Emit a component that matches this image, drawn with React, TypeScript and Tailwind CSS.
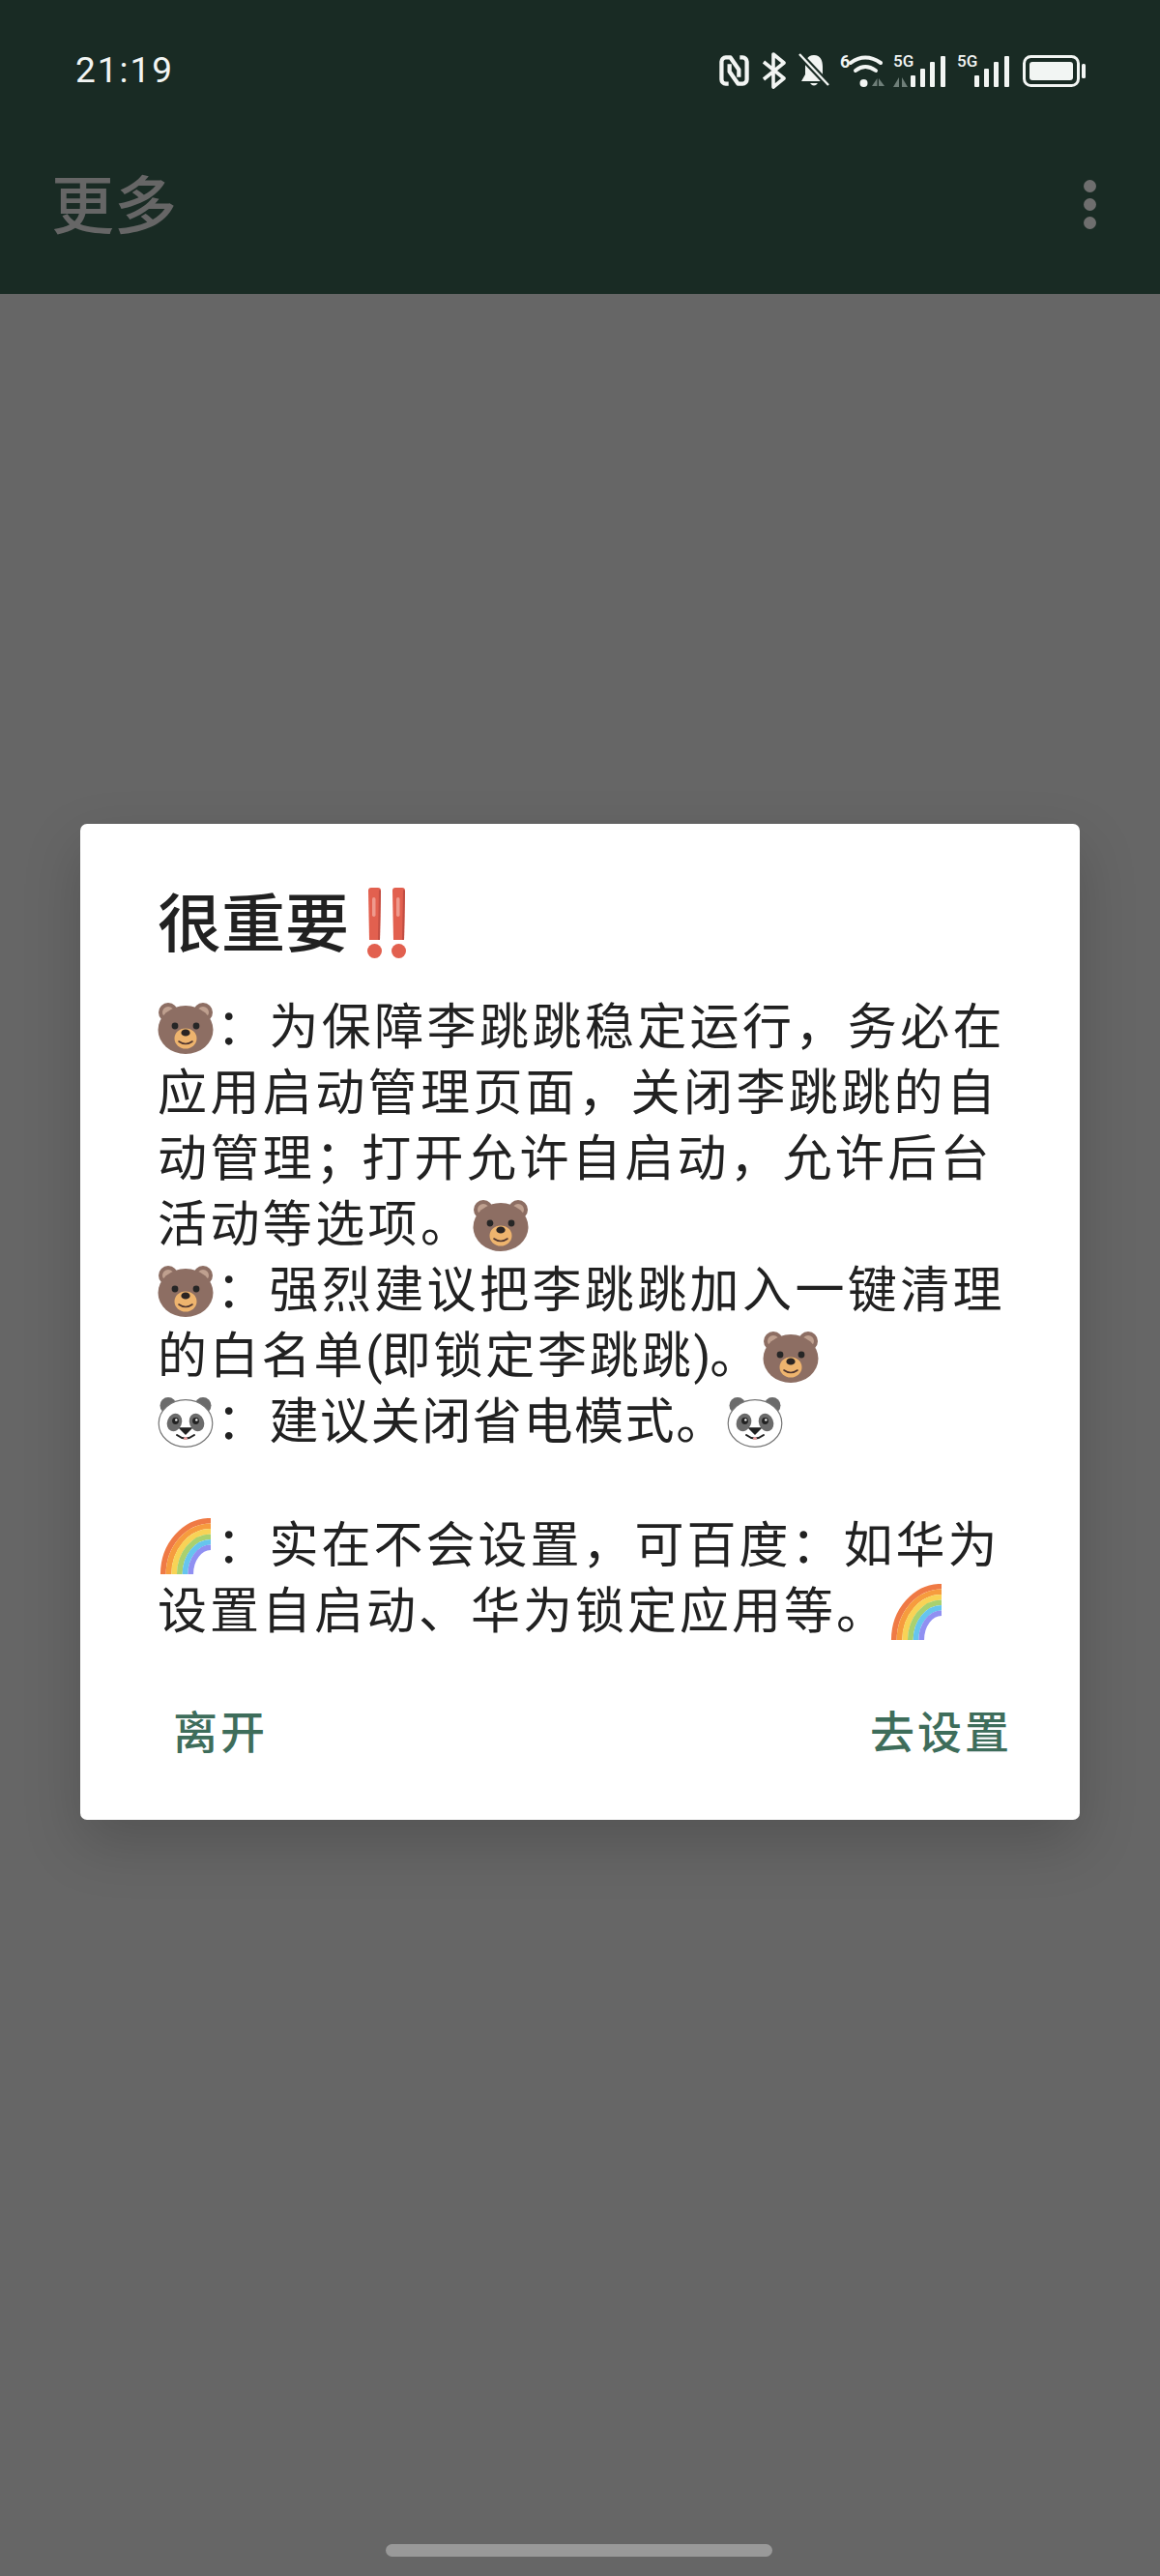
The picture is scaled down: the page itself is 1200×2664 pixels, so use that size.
import React from 'react';

const font = { fontFamily: 'Roboto, "Noto Sans CJK SC", sans-serif' };

const Bear = () => (
  <svg viewBox="0 0 58 54" className="inline-block w-[58px] h-[54px] align-[-10px] mr-[3px]">
    <circle cx="11" cy="11" r="10" fill="#8d6e63" />
    <circle cx="47" cy="11" r="10" fill="#8d6e63" />
    <circle cx="11" cy="11" r="6" fill="#bfa08f" />
    <circle cx="47" cy="11" r="6" fill="#bfa08f" />
    <ellipse cx="29" cy="29" rx="28.5" ry="25" fill="#8d6e63" />
    <circle cx="18" cy="25" r="3.4" fill="#262626" />
    <circle cx="40" cy="25" r="3.4" fill="#262626" />
    <ellipse cx="29" cy="38" rx="11.5" ry="10.5" fill="#eeb46e" />
    <ellipse cx="29" cy="32" rx="4.6" ry="3.6" fill="#2b2523" />
    <path d="M22 41 Q29 46 36 41" fill="none" stroke="#4e342e" strokeWidth="1.6" strokeLinecap="round" />
  </svg>
);

const Panda = () => (
  <svg viewBox="0 0 58 53" className="inline-block w-[58px] h-[53px] align-[-9px] mr-[3px]">
    <circle cx="11" cy="9.5" r="8.5" fill="#6b6b6b" />
    <circle cx="47" cy="9.5" r="8.5" fill="#6b6b6b" />
    <ellipse cx="29" cy="28" rx="27.8" ry="24.4" fill="#fff" stroke="#757575" strokeWidth="1.2" />
    <ellipse cx="17.5" cy="27" rx="7.5" ry="9.5" fill="#6b6b6b" transform="rotate(22 17.5 27)" />
    <ellipse cx="40.5" cy="27" rx="7.5" ry="9.5" fill="#6b6b6b" transform="rotate(-22 40.5 27)" />
    <circle cx="18.5" cy="25.5" r="3.4" fill="#222" />
    <circle cx="39.5" cy="25.5" r="3.4" fill="#222" />
    <circle cx="19.3" cy="24.4" r="1.2" fill="#fff" />
    <circle cx="40.3" cy="24.4" r="1.2" fill="#fff" />
    <path d="M23 33 H35 L29 39 Z" fill="#222" stroke="#222" strokeWidth="1.5" strokeLinejoin="round" />
    <path d="M20 40 Q29 47 38 40" fill="none" stroke="#222" strokeWidth="2" strokeLinecap="round" />
    <ellipse cx="29" cy="43.5" rx="2" ry="1.6" fill="#e8a0a0" />
  </svg>
);

const Rainbow = () => (
  <svg viewBox="0 0 58 58" className="inline-block w-[58px] h-[58px] align-[-12px] mr-[3px]">
    <g fill="none" strokeWidth="5.7">
      <path d="M55 2.75 A 49.2 55.25 0 0 0 5.8 58" stroke="#ef7a45" />
      <path d="M55 8.25 A 43.5 49.75 0 0 0 11.5 58" stroke="#f69c3e" />
      <path d="M55 13.75 A 37.8 44.25 0 0 0 17.2 58" stroke="#f8d356" />
      <path d="M55 19.25 A 32.2 38.75 0 0 0 22.8 58" stroke="#a9d16f" />
      <path d="M55 24.75 A 26.5 33.25 0 0 0 28.5 58" stroke="#66c5ee" />
      <path d="M55 30.25 A 20.8 27.75 0 0 0 34.2 58" stroke="#9090f2" />
    </g>
  </svg>
);

const DoubleBang = () => (
  <svg viewBox="0 0 40 73" className="w-[40px] h-[73px]">
    <path d="M1 3 Q1 0 4 0 H11 Q14 0 14 3 L13 54 H2 Z" fill="#e2604f" />
    <path d="M26 3 Q26 0 29 0 H36 Q39 0 39 3 L38 54 H27 Z" fill="#e2604f" />
    <path d="M12 2 L14 3 L13 54 H11 Z" fill="#c14d42" />
    <path d="M37 2 L39 3 L38 54 H36 Z" fill="#c14d42" />
    <rect x="5" y="10" width="3.5" height="20" rx="1.7" fill="#ef9a8d" />
    <rect x="30" y="10" width="3.5" height="20" rx="1.7" fill="#ef9a8d" />
    <circle cx="7.5" cy="65.5" r="7.5" fill="#e2604f" />
    <circle cx="32.5" cy="65.5" r="7.5" fill="#e2604f" />
  </svg>
);

const Signal = () => (
  <svg viewBox="0 0 36 32" className="w-[36px] h-[32px]" fill="#f2f5f3">
    <rect x="0" y="20" width="5" height="12" rx="1" />
    <rect x="10" y="13" width="5" height="19" rx="1" />
    <rect x="20" y="6" width="5" height="26" rx="1" />
    <rect x="31" y="0" width="5" height="32" rx="1" />
  </svg>
);

const Line = ({ children }: { children: React.ReactNode }) => (
  <div className="h-[68px] leading-[68px] whitespace-nowrap">{children}</div>
);

export default function App() {
  return (
    <div className="relative h-[2664px] w-[1200px] overflow-hidden bg-[#666666]" style={font}>
      {/* Шапка */}
      <header className="h-[304px] pt-[52px] bg-[#192b24]">
        <div className="flex items-center justify-between h-[42px] pl-[78px] pr-[77px]">
          <span className="text-[37px] leading-[42px] tracking-[2px] text-[#f2f5f3]">21:19</span>
          <div className="flex items-center">
            <svg viewBox="0 0 32 32" className="w-[31px] h-[32px]" fill="none" stroke="#f2f5f3" strokeWidth="4.4" strokeLinejoin="round">
              <path d="M10 30 H7 A4.5 4.5 0 0 1 2.5 25.5 V6.5 A4.5 4.5 0 0 1 7 2 H12 L21 15 V23" />
              <path d="M22 2 H25 A4.5 4.5 0 0 1 29.5 6.5 V25.5 A4.5 4.5 0 0 1 25 30 H20 L11 17 V9" />
            </svg>
            <svg viewBox="0 0 25 38" className="w-[25px] h-[38px] ml-[13px]" fill="none" stroke="#f2f5f3" strokeWidth="3.6" strokeLinejoin="round">
              <path d="M2 10 L23 27 L12 36 V2 L23 11 L2 28" />
            </svg>
            <svg viewBox="0 0 32 36" className="w-[32px] h-[36px] ml-[13px]">
              <path d="M16 2 C23 2 25 8 25 14 V22 L29 29 H3 L7 22 V14 C7 8 9 2 16 2 Z" fill="#f2f5f3" />
              <path d="M12 31 H20 Q16 36 12 31 Z" fill="#f2f5f3" />
              <path d="M1 1 L31 33" stroke="#192b24" strokeWidth="6.5" />
              <path d="M1 1 L31 33" stroke="#f2f5f3" strokeWidth="2.4" />
            </svg>
            <span className="ml-[11px] mb-[18px] w-[9px] text-[18px] leading-[18px] font-bold text-[#f2f5f3]">6</span>
            <svg viewBox="0 0 38 34" className="w-[38px] h-[34px]">
              <g fill="none" stroke="#f2f5f3" strokeWidth="4" strokeLinecap="round">
                <path d="M2 9 Q17 -2 33 9" />
                <path d="M7 17 Q17 9 28 17" />
              </g>
              <circle cx="15.5" cy="30" r="4" fill="#f2f5f3" />
              <path d="M24 33 L29.5 25 V33 Z M31 25 L37 33 H31 Z" fill="#6f7f79" />
            </svg>
            <div className="relative w-[54px] h-[34px] ml-[8px]">
              <span className="absolute left-0 top-[-1px] text-[17px] leading-[16px] font-medium text-[#f2f5f3]">5G</span>
              <svg viewBox="0 0 16 10" className="absolute left-0 bottom-0 w-[16px] h-[10px]">
                <path d="M0 10 L6 0 V10 Z M9 0 L15 10 H9 Z" fill="#6f7f79" />
              </svg>
              <div className="absolute right-0 bottom-0"><Signal /></div>
            </div>
            <div className="relative w-[54px] h-[34px] ml-[12px]">
              <span className="absolute left-0 top-[-1px] text-[17px] leading-[16px] font-medium text-[#f2f5f3]">5G</span>
              <div className="absolute right-0 bottom-0"><Signal /></div>
            </div>
            <svg viewBox="0 0 65 33" className="w-[65px] h-[33px] ml-[14px]">
              <rect x="1.5" y="1.5" width="56" height="30" rx="7" fill="none" stroke="#f2f5f3" strokeWidth="3" />
              <rect x="7" y="7" width="45" height="19" rx="3" fill="#f2f5f3" />
              <rect x="61" y="9" width="4" height="15" rx="1.5" fill="#f2f5f3" />
            </svg>
          </div>
        </div>
        <div className="flex items-center justify-between h-[64px] mt-[85px] pl-[53px] pr-[66px]">
          <h1 className="mt-[6px] text-[65px] leading-[64px] font-medium text-[#666666]">更多</h1>
          <div className="flex flex-col gap-[6px]">
            <span className="w-[13px] h-[13px] rounded-full bg-[#6e6e6e]" />
            <span className="w-[13px] h-[13px] rounded-full bg-[#6e6e6e]" />
            <span className="w-[13px] h-[13px] rounded-full bg-[#6e6e6e]" />
          </div>
        </div>
      </header>

      {/* Диалог */}
      <div className="ml-[83px] mt-[548px] w-[1034px] h-[1030px] rounded-[7px] bg-white pt-[65px] pl-[80px] pr-[70px] shadow-[0_24px_60px_rgba(0,0,0,0.18)]">
        <div className="flex items-center h-[80px] text-[66px] leading-[80px] font-medium text-[#212121]">
          很重要
          <span className="ml-[19px] flex -mt-[6px]"><DoubleBang /></span>
        </div>
        <div className="mt-[32px] text-[51px] tracking-[3.4px] text-[#212121]">
          <Line><Bear />：为保障李跳跳稳定运行，务必在</Line>
          <Line>应用启动管理页面，关闭李跳跳的自</Line>
          <Line>动管理<span className="tracking-[-3px]">；</span>打开允许自启动，允许后台</Line>
          <Line>活动等选项。<Bear /></Line>
          <Line><Bear />：强烈建议把李跳跳加入一键清理</Line>
          <Line><span className="tracking-[2.8px]">的白名单</span><span className="tracking-[-1px]">(</span><span className="tracking-[2.8px]">即锁定李跳跳</span><span className="tracking-[-1px]">)</span>。<Bear /></Line>
          <Line><Panda />：<span className="tracking-[1.6px]">建议关闭省电模式。</span><Panda /></Line>
          <div className="h-[60px]" />
          <Line><Rainbow />：<span className="tracking-[3px]">实在不会设置，可百度：如华为</span></Line>
          <Line><span className="tracking-[3px]">设置自启动、华为锁定应用等。</span><Rainbow /></Line>
        </div>
        <div className="flex justify-between mt-[51px] ml-[16px] text-[46px] font-medium tracking-[3px] leading-[80px] text-[#3e6d5b]">
          <button>离开</button>
          <button>去设置</button>
        </div>
      </div>

      {/* Home indicator */}
      <div className="absolute left-[399px] top-[2631px] w-[400px] h-[13px] rounded-full bg-[#999999]" />
    </div>
  );
}
